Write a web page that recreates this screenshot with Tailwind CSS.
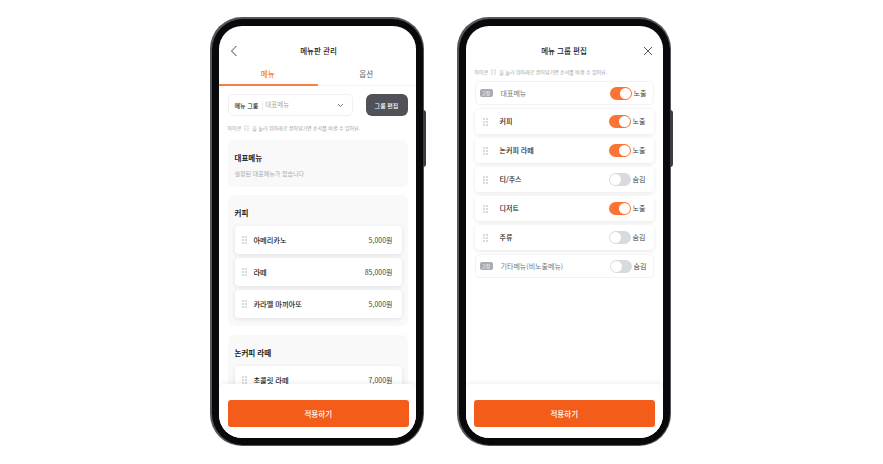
<!DOCTYPE html>
<html lang="ko">
<head>
  <meta charset="UTF-8" />
  <title>메뉴판 관리</title>
  <script src="https://cdn.jsdelivr.net/npm/@tailwindcss/browser@4"></script>
</head>
<body class="h-[464px] w-[883px] overflow-hidden bg-white font-['Noto_Sans_CJK_KR','Noto_Sans',sans-serif] text-[#222]">
  <div class="flex justify-center gap-[33px] pr-[2px] pt-[17px]">

    <!-- phone 1: menu -->
    <div class="relative h-[429px] w-[214px] rounded-[32px] bg-[#55565c] p-[1.5px]">
      <div class="absolute left-[213px] top-[93px] h-[57px] w-[3px] rounded-r-sm bg-[#3c3d42]"></div>
      <div class="h-full rounded-[31px] bg-[#08090b] px-[7px] py-[7.5px]">
        <div class="relative h-[412px] w-[197px] overflow-hidden rounded-[23px] bg-white">
          <div class="flex h-[43px] justify-center pl-[3px] pt-[19px] text-[7.5px] font-medium leading-[12px]">
            <svg class="absolute left-[11px] top-[19px]" width="8" height="12" viewBox="0 0 8 12" fill="none" stroke="#444" stroke-width="1"><path d="M6.5 1 1.5 6l5 5"/></svg>
            메뉴판 관리
          </div>
          <div class="flex h-[10px] text-[7.5px] leading-[10px]">
            <div class="flex-1 text-center font-medium text-[#f58045]">메뉴</div>
            <div class="flex-1 text-center text-[#666]">옵션</div>
          </div>
          <div class="mt-[5px] h-[2px] border-b border-[#f4f4f4]"><div class="h-[2px] w-[99px] bg-[#f58045]"></div></div>

          <div class="pl-[9px] pr-[8px] pt-[8px]">
            <div class="flex gap-[13px]">
              <div class="flex h-[22px] w-[125px] items-center rounded-[5px] border border-[#f0f0f0] pl-[6px] pr-[8px] text-[6.5px]">
                <span class="border-r border-[#eee] pr-[4px] text-[6px] font-medium">메뉴 그룹</span>
                <span class="ml-[2px] flex-1 text-[#aaa]">대표메뉴</span>
                <svg width="7" height="5" viewBox="0 0 7 5" fill="none" stroke="#555" stroke-width="0.8"><path d="m1 1 2.5 2.5L6 1"/></svg>
              </div>
              <div class="flex h-[22px] w-[42px] items-center justify-center rounded-[6px] bg-[#505159] text-[6px] font-medium text-white">그룹 편집</div>
            </div>
            <p class="mt-[7px] flex h-[9px] items-center gap-[2px] text-[5px] leading-[9px] text-[#a0a0a0]">
              아이콘
              <svg class="mx-[1px]" width="5" height="6" viewBox="0 0 5 6" fill="#999"><circle cx="1" cy="1" r=".6"/><circle cx="4" cy="1" r=".6"/><circle cx="1" cy="3" r=".6"/><circle cx="4" cy="3" r=".6"/><circle cx="1" cy="5" r=".6"/><circle cx="4" cy="5" r=".6"/></svg>
              을 눌러 위아래로 끌어당기면 순서를 바꿀 수 있어요.
            </p>

            <div class="mt-[8px] h-[47px] rounded-[6px] bg-[#f9f9f9] pl-[7px] pr-[6px] pt-[12px]">
              <div class="text-[7.5px] font-bold leading-[12px]">대표메뉴</div>
              <div class="mt-[5px] text-[6px] leading-[9px] text-[#aaa]">설정된 대표메뉴가 없습니다</div>
            </div>

            <div class="mt-[8px] rounded-[6px] bg-[#f9f9f9] pb-[8px] pl-[7px] pr-[6px] pt-[12px]">
              <div class="text-[7.5px] font-bold leading-[12px]">커피</div>
              <div class="mt-[7px] flex flex-col gap-[4px]">
                <div class="flex h-[28px] items-center rounded-[4px] bg-white pl-[7px] pr-[9px] text-[7px] shadow-[0_1px_4px_rgba(0,0,0,0.1)]">
                  <svg width="5" height="8" viewBox="0 0 5 8" fill="#aaa"><circle cx="1" cy="1" r=".8"/><circle cx="4" cy="1" r=".8"/><circle cx="1" cy="4" r=".8"/><circle cx="4" cy="4" r=".8"/><circle cx="1" cy="7" r=".8"/><circle cx="4" cy="7" r=".8"/></svg>
                  <span class="ml-[7px] flex-1 text-[7.2px] font-medium">아메리카노</span><span class="text-[#444]">5,000원</span>
                </div>
                <div class="flex h-[28px] items-center rounded-[4px] bg-white pl-[7px] pr-[9px] text-[7px] shadow-[0_1px_4px_rgba(0,0,0,0.1)]">
                  <svg width="5" height="8" viewBox="0 0 5 8" fill="#aaa"><circle cx="1" cy="1" r=".8"/><circle cx="4" cy="1" r=".8"/><circle cx="1" cy="4" r=".8"/><circle cx="4" cy="4" r=".8"/><circle cx="1" cy="7" r=".8"/><circle cx="4" cy="7" r=".8"/></svg>
                  <span class="ml-[7px] flex-1 text-[7.2px] font-medium">라떼</span><span class="text-[#444]">85,000원</span>
                </div>
                <div class="flex h-[28px] items-center rounded-[4px] bg-white pl-[7px] pr-[9px] text-[7px] shadow-[0_1px_4px_rgba(0,0,0,0.1)]">
                  <svg width="5" height="8" viewBox="0 0 5 8" fill="#aaa"><circle cx="1" cy="1" r=".8"/><circle cx="4" cy="1" r=".8"/><circle cx="1" cy="4" r=".8"/><circle cx="4" cy="4" r=".8"/><circle cx="1" cy="7" r=".8"/><circle cx="4" cy="7" r=".8"/></svg>
                  <span class="ml-[7px] flex-1 text-[7.2px] font-medium">카라멜 마끼아또</span><span class="text-[#444]">5,000원</span>
                </div>
              </div>
            </div>

            <div class="mt-[9px] rounded-[6px] bg-[#f9f9f9] pb-[8px] pl-[7px] pr-[6px] pt-[12px]">
              <div class="text-[7.5px] font-bold leading-[12px]">논커피 라떼</div>
              <div class="mt-[7px]">
                <div class="flex h-[28px] items-center rounded-[4px] bg-white pl-[7px] pr-[9px] text-[7px] shadow-[0_1px_4px_rgba(0,0,0,0.1)]">
                  <svg width="5" height="8" viewBox="0 0 5 8" fill="#aaa"><circle cx="1" cy="1" r=".8"/><circle cx="4" cy="1" r=".8"/><circle cx="1" cy="4" r=".8"/><circle cx="4" cy="4" r=".8"/><circle cx="1" cy="7" r=".8"/><circle cx="4" cy="7" r=".8"/></svg>
                  <span class="ml-[7px] flex-1 text-[7.2px] font-medium">초콜릿 라떼</span><span class="text-[#444]">7,000원</span>
                </div>
              </div>
            </div>
          </div>

          <!-- fixed bottom bar -->
          <div class="absolute inset-x-0 bottom-0 h-[54px] rounded-t-[6px] bg-white pl-[9.5px] pr-[7px] pt-[16px] shadow-[0_-2px_5px_rgba(0,0,0,0.06)]">
            <div class="flex h-[27px] items-center justify-center rounded-[3px] bg-[#f45c19] text-[7.5px] font-medium text-white">적용하기</div>
          </div>
        </div>
      </div>
    </div>

    <!-- phone 2: group edit -->
    <div class="relative h-[429px] w-[214px] rounded-[32px] bg-[#55565c] p-[1.5px]">
      <div class="absolute left-[213px] top-[93px] h-[57px] w-[3px] rounded-r-sm bg-[#3c3d42]"></div>
      <div class="h-full rounded-[31px] bg-[#08090b] px-[7px] py-[7.5px]">
        <div class="relative h-[412px] w-[197px] overflow-hidden rounded-[23px] bg-white">
          <div class="flex h-[42px] justify-center pt-[19px] text-[7.5px] font-medium leading-[12px]">
            메뉴 그룹 편집
            <svg class="absolute right-[10px] top-[20px]" width="10" height="10" viewBox="0 0 10 10" fill="none" stroke="#444" stroke-width="0.9"><path d="m1 1 8 8M9 1l-8 8"/></svg>
          </div>
          <div class="px-[9px]">
            <p class="-mt-[1px] flex h-[9px] items-center gap-[2px] text-[5px] leading-[9px] text-[#a0a0a0]">
              아이콘
              <svg class="mx-[1px]" width="5" height="6" viewBox="0 0 5 6" fill="#999"><circle cx="1" cy="1" r=".6"/><circle cx="4" cy="1" r=".6"/><circle cx="1" cy="3" r=".6"/><circle cx="4" cy="3" r=".6"/><circle cx="1" cy="5" r=".6"/><circle cx="4" cy="5" r=".6"/></svg>
              을 눌러 위아래로 끌어당기면 순서를 바꿀 수 있어요.
            </p>

            <div class="mt-[5px] flex flex-col gap-[4px] text-[7px]">
              <div class="flex h-[24px] items-center rounded-[4px] border border-[#f3f3f3] pl-[4px] pr-[6px] text-[#777]">
                <span class="flex h-[8px] w-[13px] items-center justify-center rounded-[2px] bg-[#a9abb0] text-[4.5px] text-white">고정</span>
                <span class="ml-[8px] flex-1">대표메뉴</span>
                <span class="flex h-[13px] w-[22px] items-center justify-end rounded-full bg-[#fb7433] pr-[1px]"><span class="size-[11px] rounded-full bg-white"></span></span>
                <span class="ml-[2px] w-[13px] text-[#444]">노출</span>
              </div>
              <div class="flex h-[25px] items-center rounded-[4px] bg-white pl-[8px] pr-[8px] font-medium shadow-[0_1px_4px_rgba(0,0,0,0.1)]">
                <svg width="5" height="8" viewBox="0 0 5 8" fill="#aaa"><circle cx="1" cy="1" r=".8"/><circle cx="4" cy="1" r=".8"/><circle cx="1" cy="4" r=".8"/><circle cx="4" cy="4" r=".8"/><circle cx="1" cy="7" r=".8"/><circle cx="4" cy="7" r=".8"/></svg>
                <span class="ml-[12px] flex-1">커피</span>
                <span class="flex h-[13px] w-[22px] items-center justify-end rounded-full bg-[#fb7433] pr-[1px]"><span class="size-[11px] rounded-full bg-white"></span></span>
                <span class="ml-[2px] w-[13px] font-normal text-[#444]">노출</span>
              </div>
              <div class="flex h-[25px] items-center rounded-[4px] bg-white pl-[8px] pr-[8px] font-medium shadow-[0_1px_4px_rgba(0,0,0,0.1)]">
                <svg width="5" height="8" viewBox="0 0 5 8" fill="#aaa"><circle cx="1" cy="1" r=".8"/><circle cx="4" cy="1" r=".8"/><circle cx="1" cy="4" r=".8"/><circle cx="4" cy="4" r=".8"/><circle cx="1" cy="7" r=".8"/><circle cx="4" cy="7" r=".8"/></svg>
                <span class="ml-[12px] flex-1">논커피 라떼</span>
                <span class="flex h-[13px] w-[22px] items-center justify-end rounded-full bg-[#fb7433] pr-[1px]"><span class="size-[11px] rounded-full bg-white"></span></span>
                <span class="ml-[2px] w-[13px] font-normal text-[#444]">노출</span>
              </div>
              <div class="flex h-[25px] items-center rounded-[4px] bg-white pl-[8px] pr-[8px] font-medium shadow-[0_1px_4px_rgba(0,0,0,0.1)]">
                <svg width="5" height="8" viewBox="0 0 5 8" fill="#aaa"><circle cx="1" cy="1" r=".8"/><circle cx="4" cy="1" r=".8"/><circle cx="1" cy="4" r=".8"/><circle cx="4" cy="4" r=".8"/><circle cx="1" cy="7" r=".8"/><circle cx="4" cy="7" r=".8"/></svg>
                <span class="ml-[12px] flex-1">티/주스</span>
                <span class="flex h-[13px] w-[22px] items-center rounded-full bg-[#d9dade] pl-[1px]"><span class="size-[11px] rounded-full bg-white"></span></span>
                <span class="ml-[2px] w-[13px] font-normal text-[#444]">숨김</span>
              </div>
              <div class="flex h-[25px] items-center rounded-[4px] bg-white pl-[8px] pr-[8px] font-medium shadow-[0_1px_4px_rgba(0,0,0,0.1)]">
                <svg width="5" height="8" viewBox="0 0 5 8" fill="#aaa"><circle cx="1" cy="1" r=".8"/><circle cx="4" cy="1" r=".8"/><circle cx="1" cy="4" r=".8"/><circle cx="4" cy="4" r=".8"/><circle cx="1" cy="7" r=".8"/><circle cx="4" cy="7" r=".8"/></svg>
                <span class="ml-[12px] flex-1">디저트</span>
                <span class="flex h-[13px] w-[22px] items-center justify-end rounded-full bg-[#fb7433] pr-[1px]"><span class="size-[11px] rounded-full bg-white"></span></span>
                <span class="ml-[2px] w-[13px] font-normal text-[#444]">노출</span>
              </div>
              <div class="flex h-[25px] items-center rounded-[4px] bg-white pl-[8px] pr-[8px] font-medium shadow-[0_1px_4px_rgba(0,0,0,0.1)]">
                <svg width="5" height="8" viewBox="0 0 5 8" fill="#aaa"><circle cx="1" cy="1" r=".8"/><circle cx="4" cy="1" r=".8"/><circle cx="1" cy="4" r=".8"/><circle cx="4" cy="4" r=".8"/><circle cx="1" cy="7" r=".8"/><circle cx="4" cy="7" r=".8"/></svg>
                <span class="ml-[12px] flex-1">주류</span>
                <span class="flex h-[13px] w-[22px] items-center rounded-full bg-[#d9dade] pl-[1px]"><span class="size-[11px] rounded-full bg-white"></span></span>
                <span class="ml-[2px] w-[13px] font-normal text-[#444]">숨김</span>
              </div>
              <div class="flex h-[24px] items-center rounded-[4px] border border-[#f3f3f3] pl-[4px] pr-[6px] text-[#777]">
                <span class="flex h-[8px] w-[13px] items-center justify-center rounded-[2px] bg-[#a9abb0] text-[4.5px] text-white">고정</span>
                <span class="ml-[8px] flex-1">기타메뉴(비노출메뉴)</span>
                <span class="flex h-[13px] w-[22px] items-center rounded-full bg-[#d9dade] pl-[1px]"><span class="size-[11px] rounded-full bg-white"></span></span>
                <span class="ml-[2px] w-[13px] text-[#444]">숨김</span>
              </div>
            </div>
          </div>

          <div class="absolute inset-x-0 bottom-0 h-[54px] rounded-t-[6px] bg-white pl-[8.5px] pr-[8px] pt-[16px] shadow-[0_-2px_5px_rgba(0,0,0,0.06)]">
            <div class="flex h-[27px] items-center justify-center rounded-[3px] bg-[#f45c19] text-[7.5px] font-medium text-white">적용하기</div>
          </div>
        </div>
      </div>
    </div>

  </div>
</body>
</html>
